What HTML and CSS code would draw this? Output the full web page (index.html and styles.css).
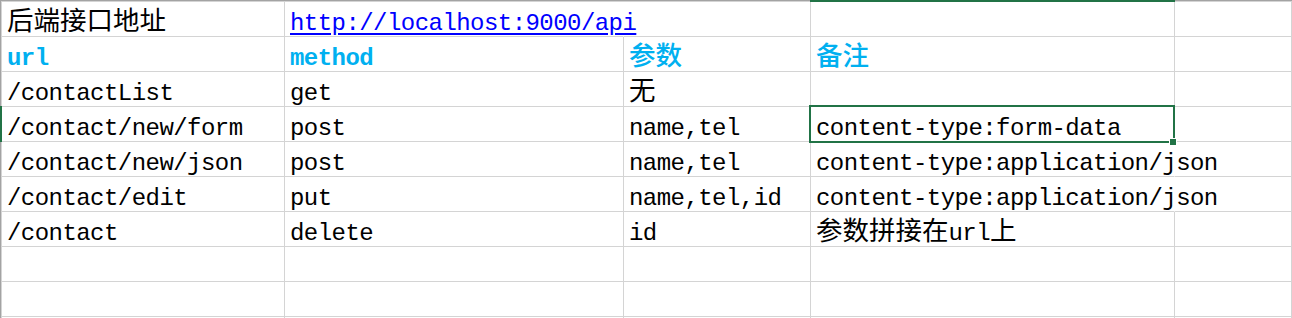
FILE: index.html
```html
<!DOCTYPE html>
<html lang="zh">
<head>
<meta charset="utf-8">
<title>接口</title>
<link rel="stylesheet" href="styles.css">
</head>
<body>
<div class="sheet">
  <div class="cell"><span class="zh">后端接口地址</span></div>
  <div class="cell spill"><a class="link" href="#">http://localhost:9000/api</a></div>
  <div class="cell"></div>
  <div class="cell"></div>
  <div class="cell"></div>

  <div class="cell head">url</div>
  <div class="cell head">method</div>
  <div class="cell head"><span class="zh">参数</span></div>
  <div class="cell head"><span class="zh">备注</span></div>
  <div class="cell"></div>

  <div class="cell">/contactList</div>
  <div class="cell">get</div>
  <div class="cell"><span class="zh">无</span></div>
  <div class="cell"></div>
  <div class="cell"></div>

  <div class="cell">/contact/new/form</div>
  <div class="cell">post</div>
  <div class="cell">name,tel</div>
  <div class="cell selected">content-type:form-data</div>
  <div class="cell"></div>

  <div class="cell">/contact/new/json</div>
  <div class="cell">post</div>
  <div class="cell">name,tel</div>
  <div class="cell spill">content-type:application/json</div>
  <div class="cell"></div>

  <div class="cell">/contact/edit</div>
  <div class="cell">put</div>
  <div class="cell">name,tel,id</div>
  <div class="cell spill">content-type:application/json</div>
  <div class="cell"></div>

  <div class="cell">/contact</div>
  <div class="cell">delete</div>
  <div class="cell">id</div>
  <div class="cell"><span class="zh">参数拼接在</span>url<span class="zh">上</span></div>
  <div class="cell"></div>

  <div class="cell"></div><div class="cell"></div><div class="cell"></div><div class="cell"></div><div class="cell"></div>
  <div class="cell"></div><div class="cell"></div><div class="cell"></div><div class="cell"></div><div class="cell"></div>
  <div class="cell"></div><div class="cell"></div><div class="cell"></div><div class="cell"></div><div class="cell"></div>

  <div class="col-mark"></div>
  <div class="row-mark"></div>
</div>
</body>
</html>
```
FILE: styles.css
```css
html, body {
  margin: 0;
  padding: 0;
  background: #ffffff;
  overflow: hidden;
}

body {
  width: 1292px;
  height: 318px;
}

.sheet {
  position: relative;
  display: grid;
  grid-template-columns: 283px 339px 187px 364px 117px;
  grid-auto-rows: 35px;
  padding: 1px 0 0 1px;
  background: #ffffff;
  box-shadow: inset 1px 1px 0 #d4d4d4;
  border-top: 1px solid #a3a3a3;
  border-left: 1px solid #a3a3a3;
  width: 1292px;
  box-sizing: border-box;
  font-family: "Liberation Mono", "Noto Sans CJK SC", monospace;
  font-size: 24px;
  letter-spacing: -0.55px;
  color: #000000;
}

.cell {
  box-sizing: border-box;
  height: 35px;
  min-width: 0;
  border-right: 1px solid #d4d4d4;
  border-bottom: 1px solid #d4d4d4;
  padding: 9px 0 0 5px;
  line-height: 25px;
  white-space: nowrap;
}

.cell.spill {
  border-right-color: transparent;
}

.zh {
  font-family: "Noto Sans CJK SC", sans-serif;
  font-size: 26.5px;
  font-weight: 400;
  letter-spacing: 0;
  line-height: 0;
}

.head {
  color: #00b0f0;
  font-weight: bold;
}

.head .zh {
  font-weight: 500;
}

.link {
  color: #0000ff;
  text-decoration: underline;
  text-underline-offset: 3px;
}

.selected {
  position: relative;
}

.selected::after {
  content: "";
  position: absolute;
  left: -2px;
  top: -2px;
  right: -1px;
  bottom: -2px;
  border: 2px solid #217346;
  z-index: 2;
}

.selected::before {
  content: "";
  position: absolute;
  right: -3px;
  bottom: -5px;
  width: 6px;
  height: 6px;
  background: #217346;
  border: 1px solid #ffffff;
  z-index: 3;
}

.col-mark {
  position: absolute;
  left: 809px;
  top: -1px;
  width: 365px;
  height: 2px;
  background: #217346;
}

.row-mark {
  position: absolute;
  left: -1px;
  top: 105px;
  width: 2px;
  height: 36px;
  background: #217346;
}
```
